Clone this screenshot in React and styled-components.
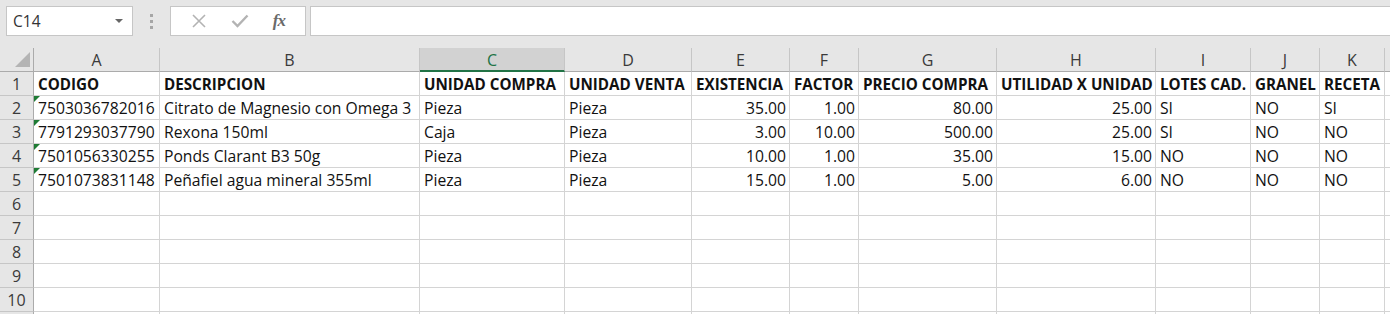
import React from 'react';
import styled, { createGlobalStyle } from 'styled-components';

const chromeBg = '#e6e6e6';
const gridLine = '#d4d4d4';
const headerLine = '#c6c6c6';
const edgeLine = '#ababab';
const excelGreen = '#217346';

const GlobalStyle = createGlobalStyle`
  html, body {
    margin: 0;
    padding: 0;
    background: ${chromeBg};
    overflow: hidden;
  }
  body {
    font-family: "Open Sans", "Liberation Sans", sans-serif;
  }
  * { box-sizing: border-box; }
`;

const columns = [
  { letter: 'A', width: 126 },
  { letter: 'B', width: 260 },
  { letter: 'C', width: 145 },
  { letter: 'D', width: 127 },
  { letter: 'E', width: 98 },
  { letter: 'F', width: 69 },
  { letter: 'G', width: 138 },
  { letter: 'H', width: 159 },
  { letter: 'I', width: 95 },
  { letter: 'J', width: 69 },
  { letter: 'K', width: 65 },
];

const headers = ['CODIGO', 'DESCRIPCION', 'UNIDAD COMPRA', 'UNIDAD VENTA', 'EXISTENCIA', 'FACTOR', 'PRECIO COMPRA', 'UTILIDAD X UNIDAD', 'LOTES CAD.', 'GRANEL', 'RECETA'];

const numeric = [false, false, false, false, true, true, true, true, false, false, false];

const data = [
  ['7503036782016', 'Citrato de Magnesio con Omega 3', 'Pieza', 'Pieza', '35.00', '1.00', '80.00', '25.00', 'SI', 'NO', 'SI'],
  ['7791293037790', 'Rexona 150ml', 'Caja', 'Pieza', '3.00', '10.00', '500.00', '25.00', 'SI', 'NO', 'NO'],
  ['7501056330255', 'Ponds Clarant B3 50g', 'Pieza', 'Pieza', '10.00', '1.00', '35.00', '15.00', 'NO', 'NO', 'NO'],
  ['7501073831148', 'Peñafiel agua mineral 355ml', 'Pieza', 'Pieza', '15.00', '1.00', '5.00', '6.00', 'NO', 'NO', 'NO'],
];

const Toolbar = styled.div`
  display: flex;
  align-items: stretch;
  height: 48px;
  padding: 6px 0 12px 6px;
`;

const NameBox = styled.div`
  width: 127px;
  display: flex;
  align-items: center;
  justify-content: space-between;
  padding: 0 9px 0 6px;
  background: #fff;
  border: 1px solid ${headerLine};
  font-size: 15.5px;
  color: #333;
`;

const DropArrow = styled.span`
  width: 0;
  height: 0;
  border-left: 4px solid transparent;
  border-right: 4px solid transparent;
  border-top: 4px solid #666;
`;

const Grip = styled.div`
  width: 37px;
  display: flex;
  flex-direction: column;
  align-items: center;
  justify-content: center;
  gap: 3px;
  span {
    width: 3px;
    height: 3px;
    background: #a6a6a6;
  }
`;

const FormulaButtons = styled.div`
  width: 136px;
  display: flex;
  align-items: center;
  justify-content: space-around;
  padding: 0 8px;
  background: #fff;
  border: 1px solid ${headerLine};
`;

const Fx = styled.span`
  font-family: "Liberation Serif", "DejaVu Serif", serif;
  font-style: italic;
  font-weight: bold;
  font-size: 17px;
  color: #6a6a6a;
  letter-spacing: -1px;
`;

const FormulaInput = styled.div`
  flex: 1;
  margin-left: 4px;
  background: #fff;
  border: 1px solid ${headerLine};
  border-right: none;
`;

const Sheet = styled.div`
  display: grid;
  grid-template-columns: 34px ${columns.map((c) => `${c.width}px`).join(' ')} 1fr;
  grid-auto-rows: 24px;
  background: #fff;
`;

const Corner = styled.div`
  position: relative;
  background: ${chromeBg};
  border-right: 1px solid ${edgeLine};
  border-bottom: 1px solid ${edgeLine};
  &::after {
    content: '';
    position: absolute;
    right: 3px;
    bottom: 4px;
    width: 0;
    height: 0;
    border-left: 15px solid transparent;
    border-bottom: 15px solid #b4b4b4;
  }
`;

const ColHead = styled.div`
  display: flex;
  align-items: center;
  justify-content: center;
  font-size: 16px;
  color: ${(p) => (p.$selected ? excelGreen : '#3a3a3a')};
  background: ${(p) => (p.$selected ? '#d2d2d2' : chromeBg)};
  border-right: 1px solid ${headerLine};
  border-bottom: ${(p) => (p.$selected ? `2px solid ${excelGreen}` : `1px solid ${edgeLine}`)};
  padding-top: ${(p) => (p.$selected ? '1px' : '0')};
`;

const RowHead = styled.div`
  display: flex;
  align-items: center;
  justify-content: center;
  font-size: 16px;
  color: #3a3a3a;
  background: ${chromeBg};
  border-right: 1px solid ${edgeLine};
  border-bottom: 1px solid ${headerLine};
`;

const Cell = styled.div`
  position: relative;
  display: flex;
  align-items: center;
  justify-content: ${(p) => (p.$right ? 'flex-end' : 'flex-start')};
  padding: 1px ${(p) => (p.$right ? '3px' : '2px')} 0 4px;
  font-size: ${(p) => (p.$bold ? '15.2px' : '15.7px')};
  font-weight: ${(p) => (p.$bold ? 700 : 400)};
  color: #111;
  white-space: nowrap;
  overflow: hidden;
  border-right: 1px solid ${gridLine};
  border-bottom: 1px solid ${gridLine};
  ${(p) =>
    p.$flag &&
    `&::before {
      content: '';
      position: absolute;
      left: 0;
      top: 0;
      border-top: 6px solid #1e7b34;
      border-right: 6px solid transparent;
    }`}
`;

function XIcon() {
  return (
    <svg width="16" height="16" viewBox="0 0 16 16">
      <path d="M2 2L14 14M14 2L2 14" stroke="#b3b3b3" strokeWidth="1.6" fill="none" />
    </svg>
  );
}

function CheckIcon() {
  return (
    <svg width="18" height="14" viewBox="0 0 18 14">
      <path d="M1.5 7L6.5 12L16.5 1.5" stroke="#b3b3b3" strokeWidth="2.4" fill="none" />
    </svg>
  );
}

export default function App() {
  const rows = [];
  // row 11 only peeks in at the bottom edge, so its label stays empty
  for (let r = 1; r <= 11; r++) {
    rows.push(<RowHead key={`rh${r}`}>{r <= 10 ? r : ''}</RowHead>);
    for (let c = 0; c < columns.length; c++) {
      let text = '';
      if (r === 1) text = headers[c];
      else if (data[r - 2]) text = data[r - 2][c];
      rows.push(
        <Cell
          key={`c${r}-${c}`}
          $bold={r === 1}
          $right={r > 1 && numeric[c]}
          $flag={c === 0 && r > 1 && !!data[r - 2]}
        >
          {text}
        </Cell>
      );
    }
    rows.push(<Cell key={`l${r}`} />);
  }

  return (
    <>
      <GlobalStyle />
      <Toolbar>
        <NameBox>
          C14
          <DropArrow />
        </NameBox>
        <Grip>
          <span />
          <span />
          <span />
        </Grip>
        <FormulaButtons>
          <XIcon />
          <CheckIcon />
          <Fx>fx</Fx>
        </FormulaButtons>
        <FormulaInput />
      </Toolbar>
      <Sheet>
        <Corner />
        {columns.map((c) => (
          <ColHead key={c.letter} $selected={c.letter === 'C'}>
            {c.letter}
          </ColHead>
        ))}
        <ColHead />
        {rows}
      </Sheet>
    </>
  );
}
